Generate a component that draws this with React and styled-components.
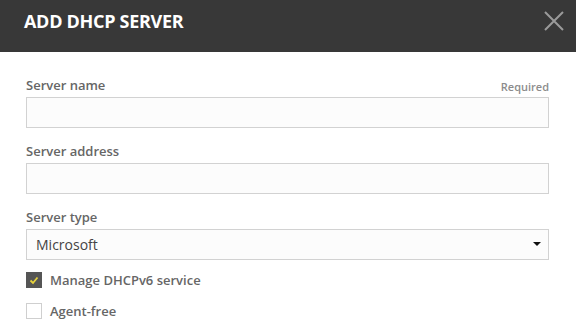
import React, { useState } from 'react';
import styled, { createGlobalStyle } from 'styled-components';

const GlobalStyle = createGlobalStyle`
  html, body {
    margin: 0;
    padding: 0;
    background: #fff;
    font-family: "Open Sans", "Liberation Sans", sans-serif;
  }
  * { box-sizing: border-box; }
`;

const CheckMark = () => (
  <svg width="10" height="9" viewBox="0 0 10 9">
    <path d="M1.5 4.5 L4 7 L8.5 1.5" stroke="#e8d33c" strokeWidth="1.8" fill="none" />
  </svg>
);

export default function App() {
  const [form, setForm] = useState({ name: '', address: '', type: 'Microsoft' });
  const [dhcpv6, setDhcpv6] = useState(true);
  const [agentFree, setAgentFree] = useState(false);

  const handleInput = e => {
    const { name, value } = e.target;
    setForm({ ...form, [name]: value });
  };

  return (
    <>
      <GlobalStyle />
      <Dialog>
        <Header>
          <Title>ADD DHCP SERVER</Title>
          <CloseBtn aria-label="Close">
            <svg width="20" height="20" viewBox="0 0 20 20">
              <path d="M1 1 L19 19 M19 1 L1 19" stroke="#9a9a9a" strokeWidth="2" fill="none" />
            </svg>
          </CloseBtn>
        </Header>
        <Body>
          <Field>
            <LabelRow>
              <Label>Server name</Label>
              <Hint>Required</Hint>
            </LabelRow>
            <Input name="name" value={form.name} onChange={handleInput} />
          </Field>
          <Field>
            <LabelRow>
              <Label>Server address</Label>
            </LabelRow>
            <Input name="address" value={form.address} onChange={handleInput} />
          </Field>
          <Field>
            <LabelRow>
              <Label>Server type</Label>
            </LabelRow>
            <SelectWrap>
              <Select name="type" value={form.type} onChange={handleInput}>
                <option value="Microsoft">Microsoft</option>
                <option value="ISC">ISC</option>
              </Select>
              <Arrow />
            </SelectWrap>
          </Field>
          <Checks>
            <CheckRow onClick={() => setDhcpv6(!dhcpv6)}>
              <Box checked={dhcpv6}>{dhcpv6 && <CheckMark />}</Box>
              <CheckText>Manage DHCPv6 service</CheckText>
            </CheckRow>
            <CheckRow onClick={() => setAgentFree(!agentFree)}>
              <Box checked={agentFree}>{agentFree && <CheckMark />}</Box>
              <CheckText>Agent-free</CheckText>
            </CheckRow>
          </Checks>
        </Body>
      </Dialog>
    </>
  );
}

const Dialog = styled.div`
  width: 576px;
  height: 330px;
  overflow: hidden;
  background: #fff;
`;

const Header = styled.div`
  display: flex;
  align-items: center;
  justify-content: space-between;
  height: 52px;
  padding: 0 12px 10px 24px;
  background: #383838;
`;

const Title = styled.h1`
  margin: 0;
  color: #fff;
  font-size: 18px;
  font-weight: 700;
  letter-spacing: -0.3px;
`;

const CloseBtn = styled.button`
  display: flex;
  padding: 0;
  border: none;
  background: none;
  cursor: pointer;
`;

const Body = styled.div`
  display: flex;
  flex-direction: column;
  gap: 13px;
  padding: 23px 27px 0 26px;
`;

const Field = styled.div`
  display: flex;
  flex-direction: column;
`;

const LabelRow = styled.div`
  display: flex;
  align-items: center;
  justify-content: space-between;
  height: 19px;
  margin-bottom: 3px;
`;

const Label = styled.label`
  color: #666;
  font-size: 13px;
  font-weight: 600;
`;

const Hint = styled.span`
  color: #8c8c8c;
  font-size: 11px;
  font-weight: 600;
  padding-top: 3px;
`;

const Input = styled.input`
  width: 100%;
  height: 31px;
  padding: 0 10px;
  border: 1px solid #d2d2d2;
  background: #fcfcfc;
  font-family: inherit;
  font-size: 14px;
  color: #444;
  outline: none;
`;

const SelectWrap = styled.div`
  position: relative;
`;

const Select = styled.select`
  width: 100%;
  height: 31px;
  padding: 0 9px;
  border: 1px solid #d2d2d2;
  background: #fcfcfc;
  font-family: inherit;
  font-size: 14px;
  color: #444;
  appearance: none;
  outline: none;
`;

const Arrow = styled.span`
  position: absolute;
  right: 8px;
  top: 13px;
  width: 0;
  height: 0;
  border-left: 4px solid transparent;
  border-right: 4px solid transparent;
  border-top: 4px solid #111;
  pointer-events: none;
`;

const Checks = styled.div`
  display: flex;
  flex-direction: column;
  gap: 15px;
  margin-top: -1px;
`;

const CheckRow = styled.div`
  display: flex;
  align-items: center;
  gap: 8px;
  height: 16px;
  cursor: pointer;
`;

const Box = styled.span`
  display: flex;
  align-items: center;
  justify-content: center;
  width: 16px;
  height: 16px;
  border: 1px solid ${({ checked }) => (checked ? '#555' : '#cfcfcf')};
  background: ${({ checked }) => (checked ? '#555' : '#fff')};
`;

const CheckText = styled.span`
  color: #666;
  font-size: 13px;
  font-weight: 600;
`;
